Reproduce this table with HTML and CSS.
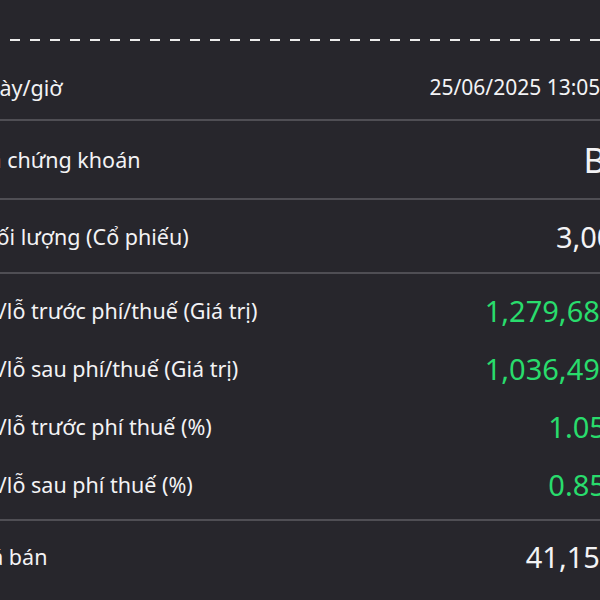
FILE: index.html
```html
<!DOCTYPE html>
<html lang="vi">
<head>
<meta charset="utf-8">
<link rel="stylesheet" href="styles.css">
</head>
<body>
<div class="sheet">
  <div class="dashes"></div>
  <div class="row row-first">
    <span class="label">Ngày/giờ</span>
    <span class="value small">25/06/2025 13:05:21</span>
  </div>
  <div class="row row-code">
    <span class="label">Mã chứng khoán</span>
    <span class="value code">BID</span>
  </div>
  <div class="row row-qty">
    <span class="label">Khối lượng (Cổ phiếu)</span>
    <span class="value big">3,000</span>
  </div>
  <div class="group">
    <div class="row row-item">
      <span class="label">Lãi/lỗ trước phí/thuế (Giá trị)</span>
      <span class="value big green">1,279,688<span class="unit">đ</span></span>
    </div>
    <div class="row row-item">
      <span class="label">Lãi/lỗ sau phí/thuế (Giá trị)</span>
      <span class="value big green">1,036,493<span class="unit">đ</span></span>
    </div>
    <div class="row row-item">
      <span class="label">Lãi/lỗ trước phí thuế (%)</span>
      <span class="value big green">1.05%</span>
    </div>
    <div class="row row-item">
      <span class="label">Lãi/lỗ sau phí thuế (%)</span>
      <span class="value big green">0.85%</span>
    </div>
  </div>
  <div class="row row-last">
    <span class="label">Giá bán</span>
    <span class="value big">41,150<span class="unit">đ</span></span>
  </div>
</div>
</body>
</html>
```
FILE: styles.css
```css
html, body {
  margin: 0;
  padding: 0;
  background: #27262c;
  overflow: hidden;
  width: 600px;
  height: 600px;
}
body {
  font-family: "Noto Sans", "Open Sans", sans-serif;
  color: #f3f3f5;
}
.sheet {
  margin-left: -30px;
  width: 660px;
  padding-top: 39px;
}
.dashes {
  height: 2px;
  margin-left: 40px;
  background: repeating-linear-gradient(to right, #ececec 0 10px, transparent 10px 20px);
}
.row {
  display: flex;
  justify-content: space-between;
  align-items: center;
  border-bottom: 2px solid #4f4e54;
}
.row-first {
  height: 64px;
  margin-top: 14px;
}
.row-code {
  height: 77px;
}
.row-qty {
  height: 72px;
}
.group {
  padding: 7px 0 6px;
  border-bottom: 2px solid #4f4e54;
}
.row-item {
  height: 58px;
  border-bottom: none;
}
.row-last {
  height: 70px;
  border-bottom: none;
}
.label {
  font-size: 21.5px;
  white-space: nowrap;
}
.value {
  white-space: nowrap;
}
.small {
  font-size: 21px;
}
.big {
  font-size: 29px;
}
.unit {
  font-size: 22px;
}
.code {
  font-size: 34px;
  margin-right: -12px;
}
.green {
  color: #29dc6c;
}
```
